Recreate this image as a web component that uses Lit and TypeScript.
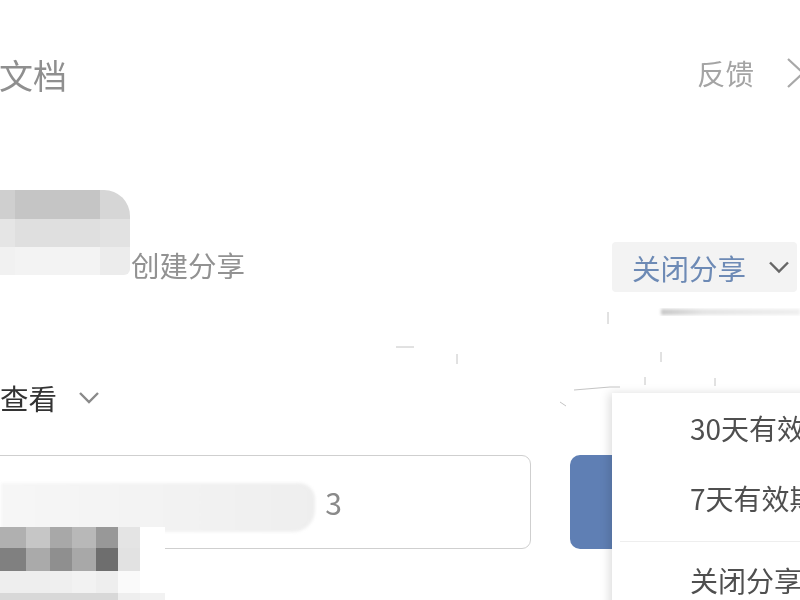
import { LitElement, html, css, svg } from "lit";
import { customElement } from "lit/decorators.js";

const topCols = "15px 85px 30px";
const topCells = ["#cfcfcf", "#c5c5c5", "#d6d6d6", "#e5e5e5", "#dfdfdf", "#e2e2e2", "#f1f1f1", "#f3f3f3", "#ececec"];
const lowCols = "26px 24px 22px 24px 22px 22px 25px";
const lowCells = [
  "#b0b0b0", "#c6c6c6", "#a8a8a8", "#b8b8b8", "#989898", "#e4e4e4", "#ffffff",
  "#808080", "#aaaaaa", "#8f8f8f", "#a8a8a8", "#6e6e6e", "#e2e2e2", "#ffffff",
  "#eeeeee", "#eeeeee", "#efefef", "#f2f2f2", "#eeeeee", "#fafafa", "#ffffff",
  "#d8d8d8", "#d8d8d8", "#d8d8d8", "#d8d8d8", "#d8d8d8", "#eeeeee", "#f2f2f2",
];

const chevron = svg`<path d="M2 3l9 9 9-9" fill="none" stroke="currentColor" stroke-width="2.4"/>`;

@customElement("app-root")
export class AppRoot extends LitElement {
  static styles = css`
    :host {
      display: block;
      position: relative;
      width: 800px;
      height: 600px;
      overflow: hidden;
      background: #fff;
      font-family: "Noto Sans CJK SC", "Liberation Sans", sans-serif;
      font-size: 28.5px;
    }
    .t { filter: blur(0.7px); white-space: nowrap; }
    .header {
      display: flex;
      justify-content: space-between;
      align-items: center;
      height: 40px;
      padding-top: 55px;
      color: #a4a4a4;
    }
    .doc { font-size: 34px; line-height: 40px; margin-left: -1px; color: #8f8f8f; }
    .feedback { display: flex; align-items: center; gap: 32px; margin-right: -4px; line-height: 40px; margin-top: -4px; }
    .feedback svg { width: 18px; height: 30px; color: #a8a8a8; filter: blur(0.6px); }
    .owner { display: flex; align-items: flex-start; margin-top: 95px; height: 102px; padding-right: 3px; }
    .mosaic { display: grid; }
    .avatar { width: 130px; height: 85px; border-top-right-radius: 26px; border-bottom-right-radius: 6px; overflow: hidden; filter: blur(0.7px); grid-template-rows: 29px 28px 28px; }
    .creator { margin-top: 55px; color: #929292; line-height: 40px; margin-left: 1px; }
    .pill {
      margin-left: auto;
      margin-top: 52px;
      width: 185px;
      height: 50px;
      box-sizing: border-box;
      padding: 0 7px 0 20px;
      display: flex;
      align-items: center;
      justify-content: space-between;
      background: #f3f3f3;
      border-radius: 4px;
      color: #6d8ab5;
    }
    .pill svg { width: 22px; height: 16px; color: #666; filter: blur(0.4px); }
    .perm { display: flex; align-items: center; gap: 21px; margin-top: 90px; height: 30px; color: #333; }
    .perm svg { width: 22px; height: 15px; color: #8a8a8a; filter: blur(0.4px); }
    .share { display: flex; margin: 43px 0 0 -10px; gap: 39px; }
    .field {
      position: relative;
      width: 541px;
      height: 94px;
      box-sizing: border-box;
      border: 1.5px solid #cfcfcf;
      border-radius: 9px;
      display: flex;
      align-items: center;
      justify-content: flex-end;
      padding: 0 188px 0 0;
      color: #8a8a8a;
    }
    .go { width: 70px; height: 94px; background: #5f7fb4; border-radius: 10px; }
    .blur-a {
      position: absolute;
      left: 10px;
      top: 27px;
      width: 314px;
      height: 49px;
      background: linear-gradient(90deg, #f6f6f6, #f2f2f2 55%, #eeeeee);
      border-radius: 0 16px 22px 0;
      filter: blur(1.5px);
    }
    .num { font-size: 30px; }
    .blur-b {
      position: absolute;
      left: 0;
      top: 527px;
      width: 165px;
      height: 73px;
      grid-template-rows: 21px 23px 22px 7px;
      filter: blur(0.5px);
    }
    .menu {
      position: absolute;
      left: 612px;
      top: 393px;
      width: 220px;
      height: 240px;
      background: #fff;
      box-shadow: -3px 0 9px rgba(0, 0, 0, 0.13);
      color: #4f4f4f;
      font-size: 28px;
    }
    .item { height: 70px; line-height: 70px; padding-left: 78px; }
    .rule { height: 1px; background: #eeeeee; margin: 8px 0 0 8px; }
    .last { height: 76px; line-height: 76px; }
    .noise { position: absolute; left: 0; top: 0; width: 800px; height: 600px; pointer-events: none; }
  `;

  private cells(list: string[], cols: string, extra: string) {
    return html`<div class="mosaic ${extra}" style="grid-template-columns:${cols}">
      ${list.map((c) => html`<div style="background:${c}"></div>`)}
    </div>`;
  }

  render() {
    return html`
      <div class="header">
        <span class="doc t">文档</span>
        <span class="feedback">
          <span class="t">反馈</span>
          <svg viewBox="0 0 18 30"><path d="M2 1l15 14L2 29" fill="none" stroke="currentColor" stroke-width="2.2"/></svg>
        </span>
      </div>
      <div class="owner">
        ${this.cells(topCells, topCols, "avatar")}
        <span class="creator t">创建分享</span>
        <div class="pill">
          <span class="t">关闭分享</span>
          <svg viewBox="0 0 22 15">${chevron}</svg>
        </div>
      </div>
      <div class="perm">
        <span class="t">查看</span>
        <svg viewBox="0 0 22 15">${chevron}</svg>
      </div>
      <div class="share">
        <div class="field">
          <div class="blur-a"></div>
          <span class="t num">3</span>
        </div>
        <div class="go"></div>
      </div>
      ${this.cells(lowCells, lowCols, "blur-b")}
      <div class="menu">
        <div class="item t">30天有效期</div>
        <div class="item t">7天有效期</div>
        <div class="rule"></div>
        <div class="item last t">关闭分享</div>
      </div>
      <svg class="noise" viewBox="0 0 800 600">
        <defs>
          <filter id="b"><feGaussianBlur stdDeviation="1.6"/></filter>
          <linearGradient id="g" x1="0" x2="1" y1="0" y2="0">
            <stop offset="0" stop-color="#c8c8c8"/>
            <stop offset="0.3" stop-color="#e4e4e4"/>
            <stop offset="1" stop-color="#efefef"/>
          </linearGradient>
        </defs>
        <rect x="661" y="309" width="139" height="6" fill="url(#g)" filter="url(#b)"/>
        <path d="M574 390l36-3 10 0M608 312v12M661 352v10M645 377v8M715 378v8M396 347h18M457 354v10M560 402l6 4"
          fill="none" stroke="#c4c4c4" stroke-width="1"/>
      </svg>
    `;
  }
}
